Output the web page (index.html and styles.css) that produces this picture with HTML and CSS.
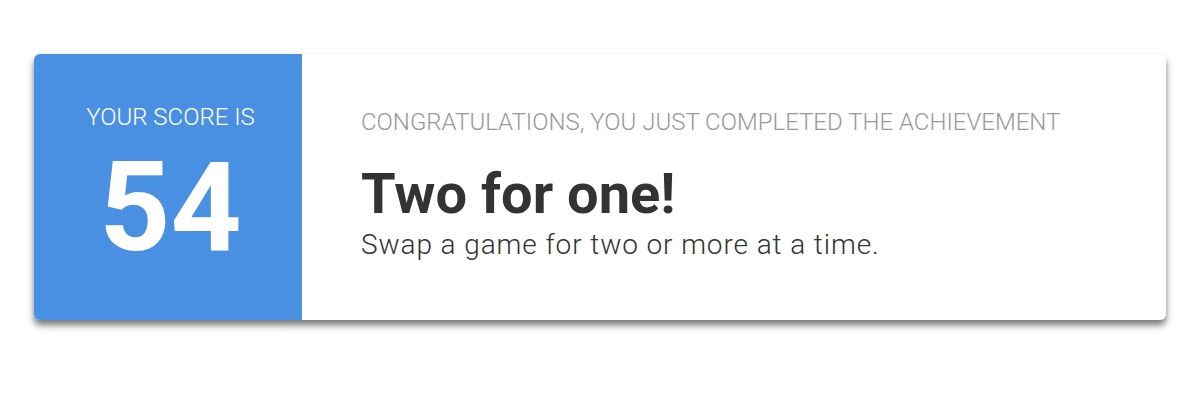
FILE: index.html
```html
<!DOCTYPE html>
<html>
<head>
<meta charset="utf-8">
<link rel="stylesheet" href="styles.css">
</head>
<body>
<div class="card">
  <div class="score">
    <div class="score-label">YOUR SCORE IS</div>
    <div class="score-value">54</div>
  </div>
  <div class="info">
    <div class="info-label">CONGRATULATIONS, YOU JUST COMPLETED THE ACHIEVEMENT</div>
    <div class="info-title">Two for one!</div>
    <div class="info-desc">Swap a game for two or more at a time.</div>
  </div>
</div>
</body>
</html>
```
FILE: styles.css
```css
html, body {
  margin: 0;
  padding: 0;
  background: #fff;
}
body {
  padding: 54px 34px;
  font-family: Roboto, "Liberation Sans", sans-serif;
}
.card {
  display: flex;
  height: 266px;
  background: #fff;
  border-radius: 6px;
  box-shadow: 0 5px 7px rgba(0, 0, 0, 0.55);
  overflow: hidden;
}
.score {
  width: 268px;
  flex: none;
  background: #4a90e2;
  color: #fff;
  display: flex;
  flex-direction: column;
  align-items: center;
  padding: 49px 0 0 5px;
  box-sizing: border-box;
}
.score-label {
  font-size: 24px;
  font-weight: 300;
  line-height: 28px;
}
.score-value {
  font-size: 124px;
  font-weight: 700;
  line-height: 124px;
  margin-top: 15px;
}
.info {
  padding: 54px 0 0 59px;
}
.info-label {
  font-size: 24px;
  font-weight: 300;
  color: #999;
  line-height: 28px;
}
.info-title {
  font-size: 56px;
  font-weight: 700;
  color: #333;
  line-height: 64px;
  margin-top: 26px;
}
.info-desc {
  font-size: 28px;
  font-weight: 300;
  color: #333;
  line-height: 32px;
  letter-spacing: 0.9px;
  margin-top: 3px;
}
```
